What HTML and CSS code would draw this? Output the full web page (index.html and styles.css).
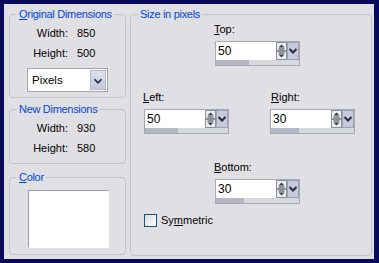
FILE: index.html
```html
<!DOCTYPE html>
<html lang="en">
  <head>
    <meta charset="UTF-8" />
    <title>Canvas Size</title>
    <link rel="stylesheet" href="styles.css">
  </head>
  <body>
    <div class="dialog">
      <div class="col-left">
        <fieldset class="group g-orig">
          <legend><u>O</u>riginal Dimensions</legend>
          <div class="dims">
            <span class="k">Width:</span><span class="v">850</span>
            <span class="k">Height:</span><span class="v">500</span>
          </div>
          <div class="select">
            <span class="select-text">Pixels</span>
            <span class="select-btn">
              <svg width="16" height="20" viewBox="0 0 16 20"><path d="M4 8 L8 12 L12 8" fill="none" stroke="#2a2a3a" stroke-width="2"/></svg>
            </span>
          </div>
        </fieldset>

        <fieldset class="group g-new">
          <legend>New Dimensions</legend>
          <div class="dims">
            <span class="k">Width:</span><span class="v">930</span>
            <span class="k">Height:</span><span class="v">580</span>
          </div>
        </fieldset>

        <fieldset class="group g-color">
          <legend><u>C</u>olor</legend>
          <div class="swatch"></div>
        </fieldset>
      </div>

      <fieldset class="group g-size">
        <legend>Size in pixels</legend>

        <div class="field f-center f-top">
          <label class="lbl"><u>T</u>op:</label>
          <div class="spin">
            <div class="spin-row">
              <span class="spin-val">50</span>
              <svg class="spin-arrows" width="11" height="18" viewBox="0 0 11 18"><rect x="0.5" y="0.5" width="10" height="8" fill="#eceef3" stroke="#8e909c"/><rect x="0.5" y="9.5" width="10" height="8" fill="#eceef3" stroke="#8e909c"/><path d="M2.5 5.5 L5.5 2.5 L8.5 5.5Z" fill="#3a3a44"/><path d="M2.5 7 H8.5" stroke="#3a3a44"/><path d="M2.5 11 H8.5" stroke="#3a3a44"/><path d="M2.5 12.5 L5.5 15.5 L8.5 12.5Z" fill="#3a3a44"/></svg>
              <svg class="spin-drop" width="12" height="18" viewBox="0 0 12 18"><rect x="0.5" y="0.5" width="11" height="17" fill="#c6cadc" stroke="#9ea2b6"/><path d="M2.5 7 L6 10.5 L9.5 7" fill="none" stroke="#2a2a3a" stroke-width="2"/></svg>
            </div>
            <div class="spin-bar"><span style="width:33px"></span></div>
          </div>
        </div>

        <div class="pair">
          <div class="field">
            <label class="lbl"><u>L</u>eft:</label>
            <div class="spin">
              <div class="spin-row">
                <span class="spin-val">50</span>
                <svg class="spin-arrows" width="11" height="18" viewBox="0 0 11 18"><rect x="0.5" y="0.5" width="10" height="8" fill="#eceef3" stroke="#8e909c"/><rect x="0.5" y="9.5" width="10" height="8" fill="#eceef3" stroke="#8e909c"/><path d="M2.5 5.5 L5.5 2.5 L8.5 5.5Z" fill="#3a3a44"/><path d="M2.5 7 H8.5" stroke="#3a3a44"/><path d="M2.5 11 H8.5" stroke="#3a3a44"/><path d="M2.5 12.5 L5.5 15.5 L8.5 12.5Z" fill="#3a3a44"/></svg>
                <svg class="spin-drop" width="12" height="18" viewBox="0 0 12 18"><rect x="0.5" y="0.5" width="11" height="17" fill="#c6cadc" stroke="#9ea2b6"/><path d="M2.5 7 L6 10.5 L9.5 7" fill="none" stroke="#2a2a3a" stroke-width="2"/></svg>
              </div>
              <div class="spin-bar"><span style="width:33px"></span></div>
            </div>
          </div>
          <div class="field f-right">
            <label class="lbl"><u>R</u>ight:</label>
            <div class="spin">
              <div class="spin-row">
                <span class="spin-val">30</span>
                <svg class="spin-arrows" width="11" height="18" viewBox="0 0 11 18"><rect x="0.5" y="0.5" width="10" height="8" fill="#eceef3" stroke="#8e909c"/><rect x="0.5" y="9.5" width="10" height="8" fill="#eceef3" stroke="#8e909c"/><path d="M2.5 5.5 L5.5 2.5 L8.5 5.5Z" fill="#3a3a44"/><path d="M2.5 7 H8.5" stroke="#3a3a44"/><path d="M2.5 11 H8.5" stroke="#3a3a44"/><path d="M2.5 12.5 L5.5 15.5 L8.5 12.5Z" fill="#3a3a44"/></svg>
                <svg class="spin-drop" width="12" height="18" viewBox="0 0 12 18"><rect x="0.5" y="0.5" width="11" height="17" fill="#c6cadc" stroke="#9ea2b6"/><path d="M2.5 7 L6 10.5 L9.5 7" fill="none" stroke="#2a2a3a" stroke-width="2"/></svg>
              </div>
              <div class="spin-bar"><span style="width:28px"></span></div>
            </div>
          </div>
        </div>

        <div class="field f-center f-bottom">
          <label class="lbl"><u>B</u>ottom:</label>
          <div class="spin">
            <div class="spin-row">
              <span class="spin-val">30</span>
              <svg class="spin-arrows" width="11" height="18" viewBox="0 0 11 18"><rect x="0.5" y="0.5" width="10" height="8" fill="#eceef3" stroke="#8e909c"/><rect x="0.5" y="9.5" width="10" height="8" fill="#eceef3" stroke="#8e909c"/><path d="M2.5 5.5 L5.5 2.5 L8.5 5.5Z" fill="#3a3a44"/><path d="M2.5 7 H8.5" stroke="#3a3a44"/><path d="M2.5 11 H8.5" stroke="#3a3a44"/><path d="M2.5 12.5 L5.5 15.5 L8.5 12.5Z" fill="#3a3a44"/></svg>
              <svg class="spin-drop" width="12" height="18" viewBox="0 0 12 18"><rect x="0.5" y="0.5" width="11" height="17" fill="#c6cadc" stroke="#9ea2b6"/><path d="M2.5 7 L6 10.5 L9.5 7" fill="none" stroke="#2a2a3a" stroke-width="2"/></svg>
            </div>
            <div class="spin-bar"><span style="width:28px"></span></div>
          </div>
        </div>

        <label class="check">
          <span class="box"></span>
          <span>Sy<u>m</u>metric</span>
        </label>
      </fieldset>
    </div>
  </body>
</html>
```

FILE: styles.css
```css
body {
  margin: 0;
  padding: 4px 5px 4px 4px;
  background-color: #0a0a5c;
  font-family: "Liberation Sans", Arial, sans-serif;
  font-size: 11px;
  color: #000;
}
.dialog {
  background-color: #e0dfe3;
  height: 255px;
  box-sizing: border-box;
  padding: 4px 2px 3px 5px;
  display: grid;
  grid-template-columns: 117px 242px;
  column-gap: 4px;
}
.col-left {
  display: flex;
  flex-direction: column;
}
.group {
  margin: 0;
  padding: 0;
  border: 1px solid #c3c3ca;
  border-radius: 4px;
  min-width: 0;
}
.group legend {
  margin-left: 7px;
  padding: 0 2px;
  line-height: 12px;
  color: #0046d5;
  letter-spacing: -0.3px;
}
.g-orig {
  padding: 3px 0 5px;
}
.g-new {
  margin-top: 5px;
  padding: 3px 0 5px;
}
.g-color {
  margin-top: 7px;
  padding: 7px 0 6px;
}
.dims {
  display: grid;
  grid-template-columns: 58px 1fr;
  column-gap: 9px;
  line-height: 20px;
}
.dims .k {
  text-align: right;
}
.select {
  width: 81px;
  height: 24px;
  margin: 5px 0 0 17px;
  box-sizing: border-box;
  border: 1px solid #a3a6b2;
  background: #fff;
  display: flex;
  align-items: center;
}
.select-text {
  padding-left: 4px;
  font-size: 11.5px;
}
.select-btn {
  margin-left: auto;
  margin-right: 1px;
  width: 16px;
  height: 20px;
  background: linear-gradient(#dde1ee, #c3c8dc);
  border: 1px solid #b4b9cc;
  box-sizing: border-box;
  display: flex;
}
.swatch {
  width: 81px;
  height: 58px;
  margin-left: 18px;
  box-sizing: border-box;
  background: #fff;
  border: 1px solid #fff;
  border-top-color: #9c9ca6;
  border-left-color: #9c9ca6;
}
.g-size {
  padding: 3px 0 0 13px;
}
.g-size legend {
  margin-left: -6px;
}
.field .lbl {
  display: block;
  line-height: 13px;
  margin-bottom: 5px;
  margin-left: -1px;
}
.f-center {
  margin-left: 71px;
}
.pair {
  display: flex;
  margin-top: 25px;
}
.f-right {
  margin-left: 41px;
}
.f-right .lbl {
  margin-left: 1px;
}
.f-bottom {
  margin-top: 27px;
}
.spin {
  width: 85px;
  box-sizing: border-box;
  border: 1px solid #a7a8b3;
  background: #d8d8df;
}
.spin-row {
  display: flex;
  height: 18px;
}
.spin-val {
  width: 60px;
  background: #fff;
  padding-left: 2px;
  box-sizing: border-box;
  font-size: 12px;
  line-height: 18px;
}
.spin-arrows,
.spin-drop {
  display: block;
}
.spin-bar {
  height: 5px;
}
.spin-bar span {
  display: block;
  height: 100%;
  background: #b4b7c3;
}
.check {
  display: flex;
  align-items: center;
  gap: 4px;
  margin-top: 10px;
  line-height: 13px;
}
.check .box {
  width: 13px;
  height: 13px;
  box-sizing: border-box;
  border: 1px solid #1c5180;
  background: linear-gradient(135deg, #dcdcd7, #fff);
}
```
